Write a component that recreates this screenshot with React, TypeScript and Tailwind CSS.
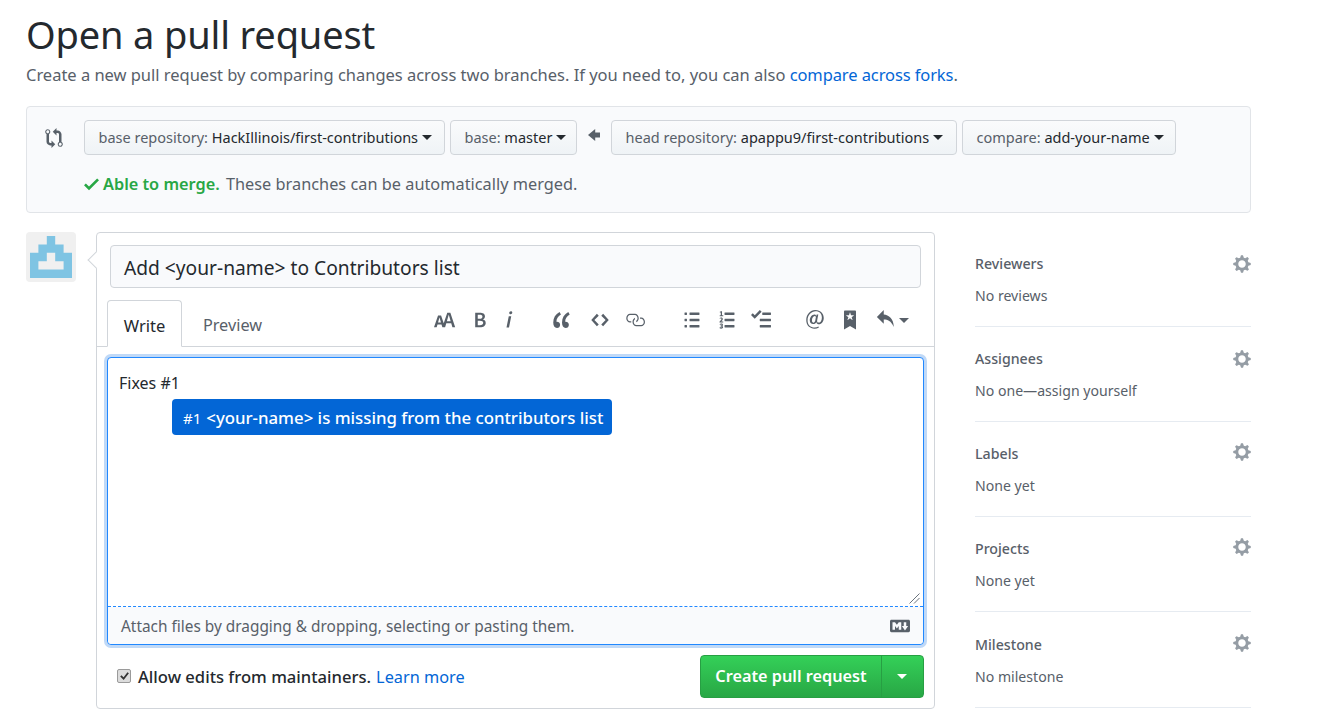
import React from "react";

type IP = { d: string; vw: number; w: number; h?: number; c?: string };
const Oct = ({ d, vw, w, h = 20, c = "fill-[#586069]" }: IP) => (
  <svg viewBox={`0 0 ${vw} 16`} width={w} height={h} className={`${c} shrink-0`}>
    <path d={d} fillRule="evenodd" />
  </svg>
);

const P = {
  compare: "M5 12H4c-.27-.02-.48-.11-.69-.31-.21-.2-.3-.42-.31-.69V4.72A1.993 1.993 0 0 0 2 1a1.993 1.993 0 0 0-1 3.72V11c.03.78.34 1.47.94 2.06.6.59 1.28.91 2.06.94h1v2l3-3-3-3v2zM2 1.8c.66 0 1.2.55 1.2 1.2 0 .65-.55 1.2-1.2 1.2C1.35 4.2.8 3.65.8 3c0-.65.55-1.2 1.2-1.2zm11 9.48V5c-.03-.78-.34-1.47-.94-2.06-.6-.59-1.28-.91-2.06-.94H9V0L6 3l3 3V4h1c.27.02.48.11.69.31.21.2.3.42.31.69v6.28A1.993 1.993 0 0 0 12 15a1.993 1.993 0 0 0 1-3.72zm-1 2.92c-.66 0-1.2-.55-1.2-1.2 0-.65.55-1.2 1.2-1.2.65 0 1.2.55 1.2 1.2 0 .65-.55 1.2-1.2 1.2z",
  check: "M12 5l-8 8-4-4 1.5-1.5L4 10l6.5-6.5L12 5z",
  gear: "M14 8.77v-1.6l-1.94-.64-.45-1.09.88-1.84-1.13-1.13-1.81.91-1.09-.45-.69-1.92h-1.6l-.63 1.94-1.11.45-1.84-.88-1.13 1.13.91 1.81-.45 1.09L0 7.23v1.59l1.94.64.45 1.09-.88 1.84 1.13 1.13 1.81-.91 1.09.45.69 1.92h1.59l.63-1.94 1.11-.45 1.84.88 1.13-1.13-.92-1.81.47-1.09L14 8.75v.02zM7 11c-1.66 0-3-1.34-3-3s1.34-3 3-3 3 1.34 3 3-1.34 3-3 3z",
  size: "M13.62 9.08L12.1 3.66h-.06l-1.5 5.42h3.08zM5.7 10.13S4.68 6.52 4.53 6.02h-.08l-1.13 4.11H5.7zM17.31 14h-2.25l-.95-3.25h-4.07L9.09 14H6.84l-.69-2.33H2.87L2.17 14H0l3.3-9.59h2.5l2.17 6.34L10.86 2h2.52l3.94 12h-.01z",
  bold: "M1 2h3.83c2.48 0 4.3.75 4.3 2.95 0 1.14-.63 2.23-1.67 2.61v.06c1.33.3 2.3 1.23 2.3 2.86 0 2.39-1.97 3.52-4.61 3.52H1V2zm3.66 4.95c1.67 0 2.38-.66 2.38-1.69 0-1.17-.78-1.61-2.34-1.61H3.13v3.3h1.53zm.27 5.39c1.77 0 2.75-.64 2.75-1.98 0-1.27-.95-1.81-2.75-1.81h-1.8v3.8h1.8v-.01z",
  italic: "M2.81 5h1.98L3 14H1l1.81-9zm.36-2.7c0-.7.58-1.3 1.33-1.3.56 0 1.13.38 1.13 1.03 0 .75-.59 1.3-1.33 1.3-.58 0-1.13-.38-1.13-1.03z",
  quote: "M6.16 3.5C3.73 5.06 2.55 6.67 2.55 9.36c.16-.05.3-.05.44-.05 1.27 0 2.5.86 2.5 2.41 0 1.61-1.03 2.61-2.5 2.61-1.9 0-2.99-1.52-2.99-4.25 0-3.8 1.75-6.53 5.02-8.42L6.16 3.5zm7 0c-2.43 1.56-3.61 3.17-3.61 5.86.16-.05.3-.05.44-.05 1.27 0 2.5.86 2.5 2.41 0 1.61-1.03 2.61-2.5 2.61-1.89 0-2.98-1.52-2.98-4.25 0-3.8 1.75-6.53 5.02-8.42l1.14 1.84h-.01z",
  code: "M9.5 3L8 4.5 11.5 8 8 11.5 9.5 13 14 8 9.5 3zm-5 0L0 8l4.5 5L6 11.5 2.5 8 6 4.5 4.5 3z",
  link: "M4 9h1v1H4c-1.5 0-3-1.69-3-3.5S2.55 3 4 3h4c1.45 0 3 1.69 3 3.5 0 1.41-.91 2.72-2 3.25V8.59c.58-.45 1-1.27 1-2.09C10 5.22 8.98 4 8 4H4c-.98 0-2 1.22-2 2.5S3 9 4 9zm9-3h-1v1h1c1 0 2 1.22 2 2.5S13.98 12 13 12H9c-.98 0-2-1.22-2-2.5 0-.83.42-1.64 1-2.09V6.25c-1.09.53-2 1.84-2 3.25C6 11.31 7.55 13 9 13h4c1.45 0 3-1.69 3-3.5S14.5 6 13 6z",
  ul: "M2 13c0 .59 0 1-.59 1H.59C0 14 0 13.59 0 13c0-.59 0-1 .59-1h.81c.59 0 .59.41.59 1H2zm2.59-9h6.81c.59 0 .59-.41.59-1 0-.59 0-1-.59-1H4.59C4 2 4 2.41 4 3c0 .59 0 1 .59 1zM1.41 7H.59C0 7 0 7.41 0 8c0 .59 0 1 .59 1h.81c.59 0 .59-.41.59-1 0-.59 0-1-.59-1h.01zm0-5H.59C0 2 0 2.41 0 3c0 .59 0 1 .59 1h.81c.59 0 .59-.41.59-1 0-.59 0-1-.59-1h.01zm10 5H4.59C4 7 4 7.41 4 8c0 .59 0 1 .59 1h6.81c.59 0 .59-.41.59-1 0-.59 0-1-.59-1h.01zm0 5H4.59C4 12 4 12.41 4 13c0 .59 0 1 .59 1h6.81c.59 0 .59-.41.59-1 0-.59 0-1-.59-1h.01z",
  ol: "M12.01 13c0 .59 0 1-.59 1H4.6c-.59 0-.59-.41-.59-1 0-.59 0-1 .59-1h6.81c.59 0 .59.41.59 1h.01zM4.6 4h6.81C12 4 12 3.59 12 3c0-.59 0-1-.59-1H4.6c-.59 0-.59.41-.59 1 0 .59 0 1 .59 1zm6.81 3H4.6c-.59 0-.59.41-.59 1 0 .59 0 1 .59 1h6.81C12 9 12 8.59 12 8c0-.59 0-1-.59-1zm-9.4-6h-.72c-.3.19-.58.25-1.03.34V2h.75v2.14H.17V5h2.84v-.86h-1V1zm.19 8.12c-.17 0-.45.03-.66.06.53-.56 1.14-1.25 1.14-1.89C2.67 6.52 2.13 6 1.31 6 .72 6 .33 6.2 0 6.59l.47.47c.19-.19.38-.38.64-.38.28 0 .48.16.48.52 0 .53-.77 1.2-1.59 2.17V10h3v-.88H2.2zm-.08 3.69v-.03c.44-.19.64-.47.64-.86 0-.7-.56-1.11-1.44-1.11-.48 0-.89.19-1.28.52l.55.64c.25-.2.44-.31.69-.31.27 0 .42.13.42.36 0 .27-.2.44-.86.44v.75c.83 0 .98.17.98.47 0 .25-.23.38-.58.38-.28 0-.56-.14-.81-.38l-.48.66c.3.36.77.56 1.41.56.83 0 1.53-.41 1.53-1.16-.02-.45-.25-.75-.77-.89v.01z",
  task: "M15.41 9H7.59C7 9 7 8.59 7 8c0-.59 0-1 .59-1h7.81c.59 0 .59.41.59 1 0 .59 0 1-.59 1h.01zM9.59 4C9 4 9 3.59 9 3c0-.59 0-1 .59-1h5.81c.59 0 .59.41.59 1 0 .59 0 1-.59 1H9.59zM0 3.91l1.41-1.3L3 4.2 7.09 0 8.5 1.41 3 6.91l-3-3zM7.59 12h7.81c.59 0 .59.41.59 1 0 .59 0 1-.59 1H7.59C7 14 7 13.59 7 13c0-.59 0-1 .59-1z",
  mention: "M6.58 15c1.25 0 2.52-.31 3.56-.94l-.42-.94c-.84.52-1.89.83-3.03.83-3.23 0-5.63-2.08-5.63-5.64 0-4.28 3.23-7.22 6.36-7.22 3.45 0 5.08 2.19 5.08 5.02 0 2.5-1.36 3.98-2.63 3.98-1.09 0-1.41-.73-1.06-2.29l.84-4.29H8.33l-.3 1.2h-.03C7.63 3.8 7.14 3.5 6.58 3.5c-2.02 0-3.76 2.29-3.76 4.68 0 1.96 1.12 3.11 2.63 3.11 1.04 0 2.03-.68 2.7-1.59h.04c.11 1.15.93 1.7 2.02 1.7 1.93 0 3.79-2.05 3.79-5.02C14 3.15 11.73 0 7.14 0 3.24 0 0 3.53 0 8.04c0 4.32 3.04 6.96 6.58 6.96zM5.87 10.1c-.75 0-1.3-.42-1.3-1.88 0-1.6.95-3.47 2.17-3.47.38 0 .7.13 1.01.63l-.66 3.67c-.4.69-.83 1.05-1.22 1.05z",
  bookmark: "M9 0H1C.27 0 0 .27 0 1v15l5-3.09L10 16V1c0-.73-.27-1-1-1zm-.78 4.25L6.36 5.61l.72 2.16c.06.22-.02.28-.2.17L5 6.6 3.12 7.94c-.19.11-.25.05-.2-.17l.72-2.16-1.86-1.36c-.17-.16-.14-.23.09-.23l2.3-.03.7-2.16h.25l.7 2.16 2.3.03c.23 0 .27.08.09.23h.01z",
  reply: "M6 3.5c3.92.44 8 3.125 8 10-2.312-5.062-4.75-6-8-6V11L.5 5.5 6 0v3.5z",
  md: "M14.85 3H1.15C.52 3 0 3.52 0 4.15v7.69C0 12.48.52 13 1.15 13h13.69c.64 0 1.15-.52 1.15-1.15v-7.7C16 3.52 15.48 3 14.85 3zM9 11H7V8L5.5 9.92 4 8v3H2V5h2l1.5 2L7 5h2v6zm2.99.5L9.5 8H11V5h2v3h1.5l-2.51 3.5z",
  left: "M6 3L0 8l6 5v-3h4V6H6V3z",
};

const Caret = ({ c = "border-t-[#24292e]", ml = "ml-[4px]" }: { c?: string; ml?: string }) => (
  <span className={`inline-block w-0 h-0 border-x-[5px] border-x-transparent border-t-[5px] ${c} ${ml}`} />
);

const RefBtn = ({ label, value, w }: { label: string; value: string; w: string }) => (
  <div className={`${w} h-[35px] shrink-0 flex items-center pl-[13.5px] text-[14.5px] rounded-[4px] border border-[#d1d5da] bg-gradient-to-b from-[#fafbfc] to-[#eff3f6] whitespace-nowrap`}>
    <span className="text-[#586069]">{label}&nbsp;</span>
    <span className="text-[#24292e]">{value}</span>
    <Caret />
  </div>
);

const SideItem = ({ title, sub, gear, item }: { title: string; sub: string; gear: string; item: string }) => (
  <div className={`${item} border-b border-[#e6ebf1]`}>
    <div className="flex items-center justify-between h-[22px]">
      <span className="text-[14.2px] font-medium text-[#586069] leading-[22px]">{title}</span>
      <span className={gear}><Oct d={P.gear} vw={14} w={18} h={20} c="fill-[#959da5]" /></span>
    </div>
    <div className="text-[14.1px] text-[#586069] mt-[10px] leading-[22px]">{sub}</div>
  </div>
);

export default function App() {
  return (
    <div className="w-[1327px] h-[717px] overflow-hidden bg-white pl-[26px] font-['Noto_Sans','Liberation_Sans',sans-serif] text-[#24292e]">
      <h1 className="text-[38px] tracking-[-0.15px] leading-[50px] pt-[9px] h-[60px] font-normal text-[#24292e]">Open a pull request</h1>
      <p className="text-[16.5px] tracking-[-0.02px] leading-[24px] mt-[3px] text-[#586069]">
        Create a new pull request by comparing changes across two branches. If you need to, you can also{" "}
        <span className="text-[#0366d6] tracking-[-0.1px]">compare across forks</span>.
      </p>

      <div className="w-[1225px] h-[107px] mt-[19px] rounded-[4px] border border-[#e1e4e8] bg-[#f9fafc] pt-[13px] pl-[18px]">
        <div className="flex items-center">
          <div className="w-[39px]"><Oct d={P.compare} vw={14} w={18} /></div>
          <div className="flex items-center gap-[5px]">
            <RefBtn label="base repository:" value="HackIllinois/first-contributions" w="w-[361px]" />
            <RefBtn label="base:" value="master" w="w-[127px]" />
            <div className="w-[24px] flex justify-center pb-[5px]"><Oct d={P.left} vw={10} w={12} c="fill-[#586069]" /></div>
            <RefBtn label="head repository:" value="apappu9/first-contributions" w="w-[346px]" />
            <RefBtn label="compare:" value="add-your-name" w="w-[214px]" />
          </div>
        </div>
        <div className="flex items-center ml-[39px] mt-[17px] text-[16.3px] leading-[24px] text-[#586069]">
          <Oct d={P.check} vw={12} w={15} c="fill-[#28a745]" />
          <span className="ml-[4px] font-semibold text-[#28a745]">Able to merge.</span>
          <span className="ml-[2px] tracking-[0.02px]">&nbsp;These branches can be automatically merged.</span>
        </div>
      </div>

      <div className="flex mt-[19px]">
        <div className="w-[50px] h-[50px] shrink-0 rounded-[4px] bg-[#f0f0f0] flex items-center justify-center">
          <svg viewBox="0 0 5 5" width="42" height="42">
            <path fillRule="evenodd" fill="#7fc4e3" d="M2 0h1v1h1v1h1v3H0V2h1V1h1zM2 2v1H1v1h3V3H3V2z" />
          </svg>
        </div>

        <div className="relative ml-[20px] w-[839px] h-[477px] rounded-[4px] border border-[#d1d5da] bg-white">
          <span className="absolute left-[-7px] top-[21px] w-[12px] h-[12px] rotate-45 bg-white border-l border-b border-[#d1d5da]" />
          <div className="relative px-[13px] pt-[12px]">
            <div className="h-[43px] flex items-center pl-[13px] pt-[4px] rounded-[4px] border border-[#d1d5da] bg-[#f9fafc] text-[19.2px] text-[#24292e]">
              Add &lt;your-name&gt; to Contributors list
            </div>
          </div>

          <div className="relative mt-[12px] h-[47px] border-b border-[#d1d5da] pl-[10px] flex items-end">
            <div className="h-[47px] w-[75px] -mb-px rounded-t-[4px] border border-[#d1d5da] border-b-white bg-white flex items-center justify-center pt-[5px] text-[16.5px] text-[#24292e]">Write</div>
            <div className="h-[47px] w-[101px] flex items-center justify-center pt-[5px] text-[16.3px] text-[#586069]">Preview</div>
            <div className="flex items-center h-[47px] pb-[5px] ml-[151px]">
              <Oct d={P.size} vw={18} w={22} />
              <span className="ml-[18px]"><Oct d={P.bold} vw={10} w={12} /></span>
              <span className="ml-[19px]"><Oct d={P.italic} vw={6} w={8} /></span>
              <span className="ml-[40px]"><Oct d={P.quote} vw={14} w={18} /></span>
              <span className="ml-[20px]"><Oct d={P.code} vw={14} w={18} /></span>
              <span className="ml-[16px]"><Oct d={P.link} vw={16} w={20} /></span>
              <span className="ml-[39px]"><Oct d={P.ul} vw={12} w={16} /></span>
              <span className="ml-[19px]"><Oct d={P.ol} vw={12} w={16} /></span>
              <span className="ml-[16px]"><Oct d={P.task} vw={16} w={20} /></span>
              <span className="ml-[35px]"><Oct d={P.mention} vw={14} w={18} /></span>
              <span className="ml-[20px]"><Oct d={P.bookmark} vw={10} w={12} /></span>
              <span className="ml-[20px]"><Oct d={P.reply} vw={14} w={18} /></span>
              <Caret c="border-t-[#586069]" ml="ml-[5px]" />
            </div>
          </div>

          <div className="relative mx-[10px] mt-[10px] w-[817px] h-[288px] rounded-[4px] border border-[#2188ff] shadow-[0_0_0_3px_#c0d9f7] bg-white flex flex-col">
            <div className="relative h-[249px] border-b border-dashed border-[#2188ff] pl-[11px] pt-[13px] text-[16px] leading-[24px] text-[#24292e]">
              Fixes #1
              <div className="absolute left-[64px] top-[41px] w-[440px] h-[36px] rounded-[4px] bg-[#0366d6] text-white flex items-center pl-[11px] pt-px text-[16.8px] font-medium whitespace-nowrap">
                <span className="text-[15px] mr-[5px] font-normal">#1</span>&lt;your-name&gt; is missing from the contributors list
              </div>
              <svg className="absolute right-[3px] bottom-[2px]" width="12" height="12" viewBox="0 0 12 12">
                <path d="M11.5 1.5L1.5 11.5M11.5 6L6 11.5" stroke="#6a737d" strokeWidth="1" />
              </svg>
            </div>
            <div className="flex-1 rounded-b-[4px] bg-[#f9fafc] flex items-center justify-between px-[13px] text-[15.4px] text-[#586069]">
              <span className="pt-[3px]">Attach files by dragging &amp; dropping, selecting or pasting them.</span>
              <Oct d={P.md} vw={16} w={20} />
            </div>
          </div>

          <div className="flex items-center justify-between mx-[10px] w-[817px] mt-[10px] h-[43px]">
            <div className="flex items-center pl-[10px] pt-[2px]">
              <span className="w-[14px] h-[14px] rounded-[2px] bg-[#dcdcdc] border border-[#9a9a9a] flex items-center justify-center mb-[3px]">
                <svg viewBox="0 0 12 12" width="11" height="11"><path d="M2 6.5L5 9.5L10 3" fill="none" stroke="#333" strokeWidth="2" /></svg>
              </span>
              <span className="ml-[7px] text-[16.6px] font-medium text-[#24292e]">Allow edits from maintainers.</span>
              <span className="ml-[5px] text-[16.3px] text-[#0366d6]">Learn more</span>
            </div>
            <div className="flex h-[43px] w-[224px] rounded-[4px] border border-[#279f43] bg-gradient-to-b from-[#34d058] to-[#28a745] text-white text-[16.25px] font-semibold">
              <div className="w-[181px] flex items-center justify-center border-r border-[#279f43]">Create pull request</div>
              <div className="flex-1 flex items-center justify-center pr-px"><Caret c="border-t-white" ml="ml-0" /></div>
            </div>
          </div>
        </div>

        <div className="ml-[40px] w-[276px]">
          <SideItem item="h-[95px] pt-[21px]" gear="pt-0" title="Reviewers" sub="No reviews" />
          <SideItem item="h-[95px] pt-[21px]" gear="pt-0" title="Assignees" sub="No one—assign yourself" />
          <SideItem item="h-[95px] pt-[21px]" gear="pb-[5px]" title="Labels" sub="None yet" />
          <SideItem item="h-[95px] pt-[21px]" gear="pb-[5px]" title="Projects" sub="None yet" />
          <SideItem item="h-[96px] pt-[22px]" gear="pb-[5px]" title="Milestone" sub="No milestone" />
        </div>
      </div>
    </div>
  );
}
